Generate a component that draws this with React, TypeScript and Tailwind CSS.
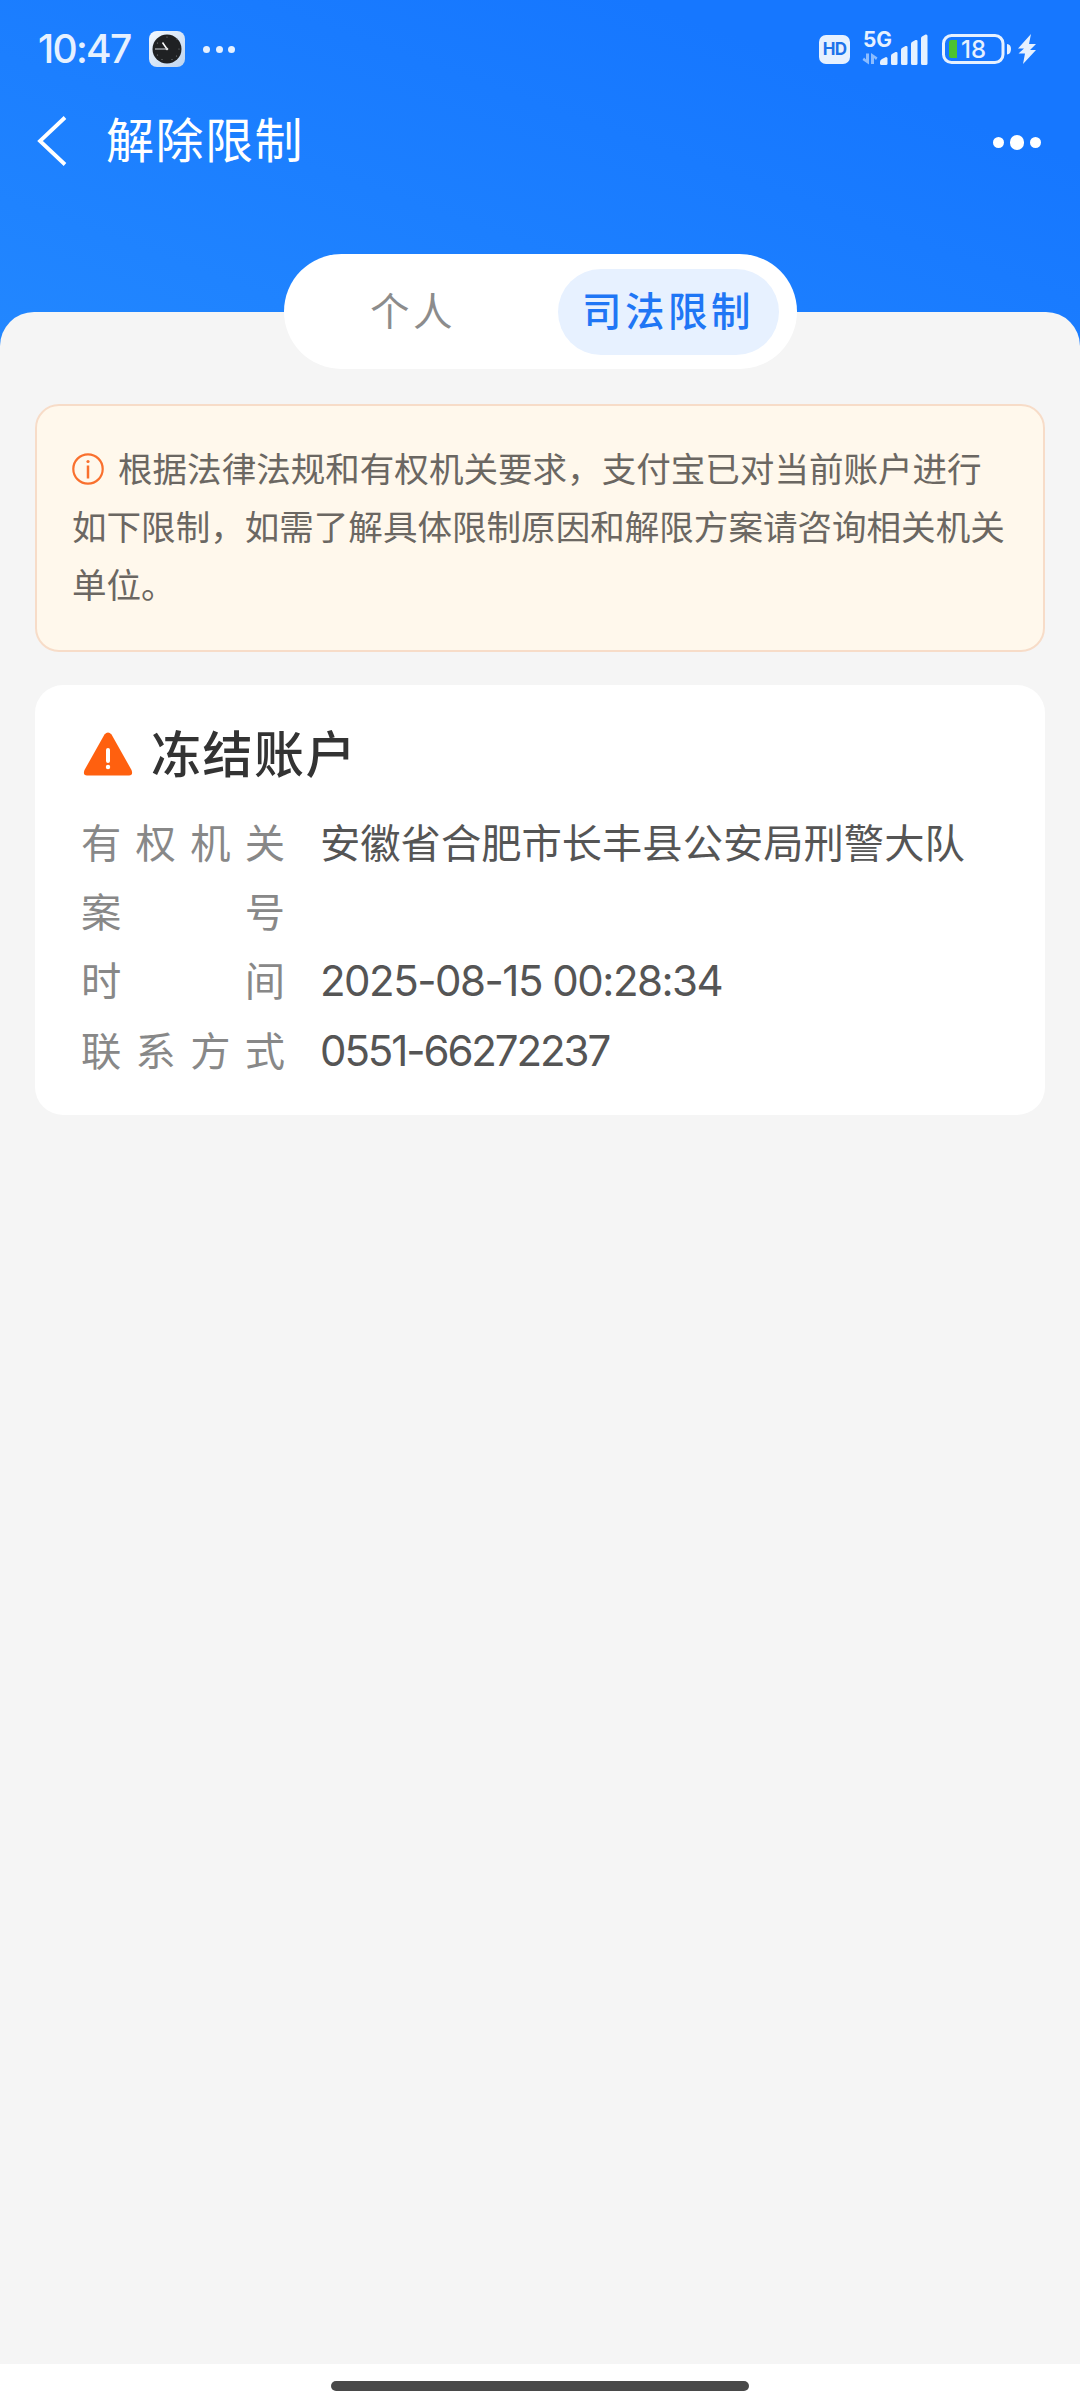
import React from "react";

function StatusBar() {
  return (
    <div className="flex h-[98px] items-center justify-between pl-[38px] pr-[43px]">
      <div className="flex items-center">
        <span className="w-[111px] font-['Inter'] text-[39px] font-medium leading-[40px] tracking-[-1.700px] text-[#e6f1ff]">10:47</span>
        <svg width="36" height="36" viewBox="0 0 36 36">
          <defs>
            <linearGradient id="case" x1="0" y1="0" x2="1" y2="1">
              <stop offset="0" stopColor="#f4f9ff" />
              <stop offset="1" stopColor="#bdd4ef" />
            </linearGradient>
          </defs>
          <rect width="36" height="36" rx="8" fill="url(#case)" />
          <circle cx="18" cy="18" r="14.5" fill="#1f2123" />
          <g fill="#85888c">
            <circle cx="18" cy="6" r=".6" />
            <circle cx="28" cy="8" r=".6" />
            <circle cx="30" cy="18" r=".6" />
            <circle cx="27.5" cy="25" r=".6" />
            <circle cx="23" cy="28.5" r=".6" />
            <circle cx="13" cy="28.5" r=".6" />
            <circle cx="8.500" cy="24" r=".6" />
            <circle cx="8.500" cy="12" r=".6" />
          </g>
          <path d="M18 18H6" stroke="#8f9296" strokeWidth="1.600" />
          <path d="M18 18L13.500 11.500" stroke="#fff" strokeWidth="1.500" />
          <circle cx="18" cy="18" r="1.300" fill="#ddd" />
        </svg>
        <div className="ml-[18px] flex gap-[5.500px]">
          <i className="size-[7px] rounded-full bg-[#e6f1ff]" />
          <i className="size-[7px] rounded-full bg-[#e6f1ff]" />
          <i className="size-[7px] rounded-full bg-[#e6f1ff]" />
        </div>
      </div>
      <div className="flex items-center">
        <div className="flex h-[29px] w-[31px] items-center justify-center rounded-[7px] bg-[#e6f1ff] font-['Inter'] text-[17px] font-bold leading-none tracking-[-0.800px] text-[#1c73ea]">HD</div>
        <svg className="ml-[12px]" width="68" height="56" viewBox="862 21 68 56">
          <text x="863" y="47" fontFamily="Inter" fontWeight="700" fontSize="21" textLength="29" lengthAdjust="spacingAndGlyphs" fill="#e6f1ff">5G</text>
          <g fill="#8bbcff">
            <path d="M866 53.500H869V64.500L862.500 60L864 57.500L866 59.500Z" />
            <path d="M874 64H871V53L877.500 57.500L876 60L874 58Z" />
          </g>
          <g fill="#e6f1ff">
            <path d="M880 62Q880 60 882 59L886 57Q887.500 57 887.500 58.500V63.500Q887.500 65 886 65H881.500Q880 65 880 63.500Z" />
            <path d="M891 56Q891 54.500 892 54L895.500 52Q897.500 51.500 897.500 53V63.500Q897.500 65 896 65H892.500Q891 65 891 63.500Z" />
            <path d="M901 50Q901 48.500 902 48L905.500 46Q907.500 45.500 907.500 47V63.500Q907.500 65 906 65H902.500Q901 65 901 63.500Z" />
            <path d="M911 44Q911 42.500 912 42L915.500 40Q917.500 39.500 917.500 41V63.500Q917.500 65 916 65H912.500Q911 65 911 63.500Z" />
            <path d="M921 38.500Q921 37 922 36.500L925.500 34.500Q927.500 34 927.500 36V63.500Q927.500 65 926 65H922.500Q921 65 921 63.500Z" />
          </g>
        </svg>
        <svg className="ml-[12px]" width="95" height="36" viewBox="942 31 95 36">
          <rect x="943.500" y="35.500" width="59.500" height="27" rx="8" fill="none" stroke="#e6f1ff" strokeWidth="3" />
          <path d="M951.500 40H957V58H951.500Q949 58 949 55.500V42.500Q949 40 951.500 40Z" fill="#4cc32d" />
          <text x="961" y="58" fontFamily="Inter" fontWeight="500" fontSize="24" textLength="25" lengthAdjust="spacingAndGlyphs" fill="#e6f1ff">18</text>
          <path d="M1007 44Q1011 44.500 1011 49Q1011 54 1007 54.500Z" fill="#e6f1ff" />
          <path d="M1031 34L1018 48.500H1024L1018.500 53.500H1025L1023 64L1036 50H1030L1036 44H1029Z" fill="#e6f1ff" />
        </svg>
      </div>
    </div>
  );
}

function TitleBar() {
  return (
    <div className="flex h-[86px] items-center justify-between pl-[37px] pr-[39px]">
      <div className="flex items-center">
        <svg width="30" height="50" viewBox="0 0 30 50">
          <path d="M28 1.500L3 25L28 48.500" fill="none" stroke="#fff" strokeWidth="3.800" />
        </svg>
        <h1 className="ml-[39px] pb-[9px] text-[48px] leading-[60px] tracking-[1.500px] text-white">解除限制</h1>
      </div>
      <div className="flex items-center gap-[5.500px] pt-[3px]">
        <i className="size-[11.500px] rounded-full bg-white" />
        <i className="size-[14.500px] rounded-full bg-white" />
        <i className="size-[11.500px] rounded-full bg-white" />
      </div>
    </div>
  );
}

function Tabs() {
  return (
    <div className="mx-auto -mt-[58px] flex h-[115px] w-[513px] items-center justify-between rounded-full bg-white pl-[20px] pr-[18px]">
      <button className="h-[86px] w-[221px] pb-[6px] pr-[2px] text-[39.500px] tracking-[3.500px] text-[#8c8c8c]">个人</button>
      <button className="h-[86px] w-[221px] rounded-full bg-[#e7f1ff] pb-[6px] text-[39.500px] font-medium tracking-[3.500px] text-[#1f76f5]">司法限制</button>
    </div>
  );
}

function Row({ label, children }: { label: string; children?: React.ReactNode }) {
  return (
    <div className="flex h-[69.200px] items-center text-[40.300px] leading-[69px]">
      <dt className="flex w-[204px] justify-between text-[#888]">
        {Array.from(label).map((c) => (
          <span key={c}>{c}</span>
        ))}
      </dt>
      <dd className="ml-[35px] whitespace-nowrap text-[#555]">{children}</dd>
    </div>
  );
}

export default function App() {
  return (
    <div className="flex h-[2408px] w-[1080px] flex-col overflow-hidden bg-[linear-gradient(200deg,#1677ff_0px,#1677ff_150px,#2287ff_694px,#2287ff_100%)] font-['Noto_Sans_CJK_SC',sans-serif]">
      <header className="h-[312px] shrink-0">
        <StatusBar />
        <TitleBar />
      </header>
      <main className="flex flex-1 flex-col rounded-t-[34px] bg-[#f5f5f5]">
        <Tabs />
        <section className="mx-[35px] mt-[35px] h-[248px] rounded-[24px] border-2 border-[#f7dcc8] bg-[#fff8ec] pl-[35px] pt-[32px] text-[34.560px] leading-[58px] text-[#6b6762]">
          <p className="flex items-center whitespace-nowrap">
            <svg className="mr-[14px] mt-[3px]" width="32" height="32" viewBox="0 0 32 32">
              <circle cx="16" cy="16" r="14.700" fill="none" stroke="#f9702e" strokeWidth="2.200" />
              <circle cx="16" cy="8.500" r="1.600" fill="#f9702e" />
              <path d="M16 12.500V25.500" stroke="#f9702e" strokeWidth="2.500" />
            </svg>
            根据法律法规和有权机关要求，支付宝已对当前账户进行
          </p>
          <p className="whitespace-nowrap">如下限制，如需了解具体限制原因和解限方案请咨询相关机关</p>
          <p>单位。</p>
        </section>
        <section className="mx-[35px] mt-[33px] h-[430px] rounded-[28px] bg-white px-[46px] pt-[33px]">
          <h2 className="flex h-[66px] items-center text-[50px] font-medium leading-[66px] tracking-[1.500px] text-[#333]">
            <svg className="ml-[2px] mr-[18px] mt-[5px]" width="50" height="44" viewBox="0 0 50 44">
              <path d="M21.500 2.500Q25 -1.500 28.500 2.500L48.500 38Q50.500 43.500 46 43.500H4Q-.5 43.500 1.500 38Z" fill="#ff600f" />
              <path d="M25 18V29" stroke="#fff" strokeWidth="4" strokeLinecap="round" />
              <circle cx="25" cy="35" r="2.200" fill="#fff" />
            </svg>
            冻结账户
          </h2>
          <dl className="mt-[22px]">
            <Row label="有权机关">安徽省合肥市长丰县公安局刑警大队</Row>
            <Row label="案号" />
            <Row label="时间">
              <span className="block pt-[4px] font-['Inter'] text-[42px] tracking-[-1.500px]">2025-08-15 00:28:34</span>
            </Row>
            <Row label="联系方式">
              <span className="block pt-[4px] font-['Inter'] text-[42px] tracking-[-2.100px]">0551-66272237</span>
            </Row>
          </dl>
        </section>
      </main>
      <footer className="h-[44px] shrink-0 bg-white pt-[17px]">
        <div className="mx-auto h-[10px] w-[418px] rounded-full bg-[#494949]" />
      </footer>
    </div>
  );
}
